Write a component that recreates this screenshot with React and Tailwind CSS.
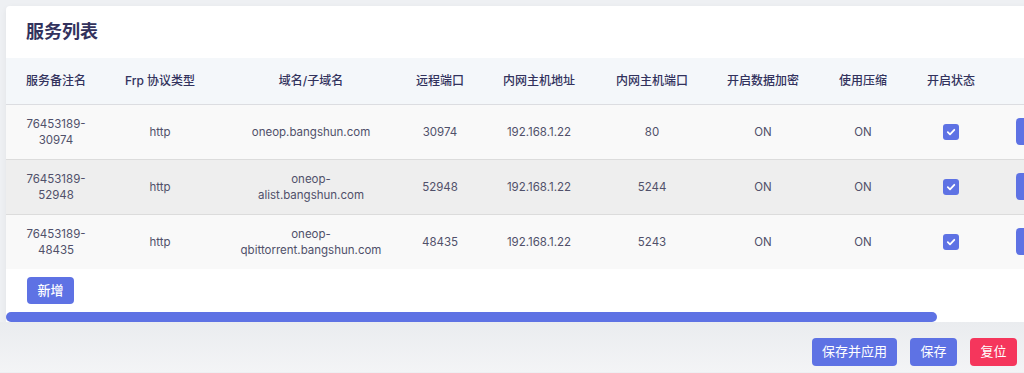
import React from 'react'

const font = { fontFamily: 'Inter, "Noto Sans CJK SC", sans-serif' }

const columns = [
	{ title: '服务备注名', width: 'w-[100px]' },
	{ title: 'Frp 协议类型', width: 'w-[108px]' },
	{ title: '域名/子域名', width: 'w-[194px]' },
	{ title: '远程端口', width: 'w-[64px]' },
	{ title: '内网主机地址', width: 'w-[134px]' },
	{ title: '内网主机端口', width: 'w-[92px]' },
	{ title: '开启数据加密', width: 'w-[130px]' },
	{ title: '使用压缩', width: 'w-[70px]' },
	{ title: '开启状态', width: 'w-[106px]' },
	{ title: '', width: 'w-[120px]' },
]

const rows = [
	{
		name: ['76453189-', '30974'],
		domain: ['oneop.bangshun.com'],
		remote: '30974',
		port: '80',
	},
	{
		name: ['76453189-', '52948'],
		domain: ['oneop-', 'alist.bangshun.com'],
		remote: '52948',
		port: '5244',
	},
	{
		name: ['76453189-', '48435'],
		domain: ['oneop-', 'qbittorrent.bangshun.com'],
		remote: '48435',
		port: '5243',
	},
]

const Check = () => (
	<span className="inline-flex h-4 w-4 items-center justify-center rounded-[3px] bg-[#5e72e4] align-middle">
		<svg width="10" height="10" viewBox="0 0 10 10" fill="none">
			<path d="M1.8 5.2 4 7.3 8.3 2.8" stroke="white" strokeWidth="1.8" strokeLinecap="round" strokeLinejoin="round" />
		</svg>
	</span>
)

const Lines = ({ lines }) => (
	<>
		{lines.map((l, i) => (
			<div key={i}>{l}</div>
		))}
	</>
)

export default function App() {
	return (
		<div className="h-[373px] w-[1024px] overflow-hidden bg-[#eef0f3]" style={font}>
			<div className="pl-[6px] pt-[6px]">
				<div className="w-[1118px] rounded-tl-[4px] bg-white shadow-[0_2px_6px_rgba(0,0,0,0.06)]">
					<h2 className="h-[52px] pl-[20px] pt-[12px] text-[18px] font-bold text-[#32325d]">服务列表</h2>
					<table className="w-[1118px] table-fixed border-collapse text-center text-[12px]">
						<thead>
							<tr className="h-[46px] border-b border-[#dcdde1] bg-[#f4f7fa]">
								{columns.map((c, i) => (
									<th key={i} className={`${c.width} p-0 font-medium text-[#32325d]`}>
										{c.title}
									</th>
								))}
							</tr>
						</thead>
						<tbody className="text-[11.5px] leading-[16px] text-[#50506a]">
							{rows.map((r, i) => (
								<tr
									key={i}
									className={`h-[55px] ${i === 1 ? 'bg-[#eeeeee]' : 'bg-[#f9f9f9]'} ${i < 2 ? 'border-b border-[#dcdcdc]' : ''}`}
								>
									<td><Lines lines={r.name} /></td>
									<td>http</td>
									<td><Lines lines={r.domain} /></td>
									<td>{r.remote}</td>
									<td>192.168.1.22</td>
									<td>{r.port}</td>
									<td>ON</td>
									<td>ON</td>
									<td><Check /></td>
									<td className="pl-[12px] text-left">
										<span className="inline-block h-[27px] w-[60px] rounded-[4px] bg-[#5e72e4] align-middle" />
									</td>
								</tr>
							))}
						</tbody>
					</table>
					<div className="flex h-[43px] items-start pl-[21px] pt-[8px]">
						<button className="h-[27px] w-[47px] rounded-[4px] bg-[#5e72e4] text-[13px] font-medium text-white">
							新增
						</button>
					</div>
					<div className="h-[10px]">
						<div className="h-[10px] w-[931px] rounded-full bg-[#5e72e4]" />
					</div>
				</div>
			</div>
			<div className="flex h-[50px] items-start justify-end gap-[13px] bg-gradient-to-b from-[#eaecef] to-[#f3f4f6] pr-[7px] pt-[16px]">
				<button className="h-[28px] w-[85px] rounded-[4px] bg-[#5e72e4] text-[13px] text-white">保存并应用</button>
				<button className="h-[28px] w-[47px] rounded-[4px] bg-[#5e72e4] text-[13px] text-white">保存</button>
				<button className="h-[28px] w-[47px] rounded-[4px] bg-[#f5365c] text-[13px] text-white">复位</button>
			</div>
		</div>
	)
}
